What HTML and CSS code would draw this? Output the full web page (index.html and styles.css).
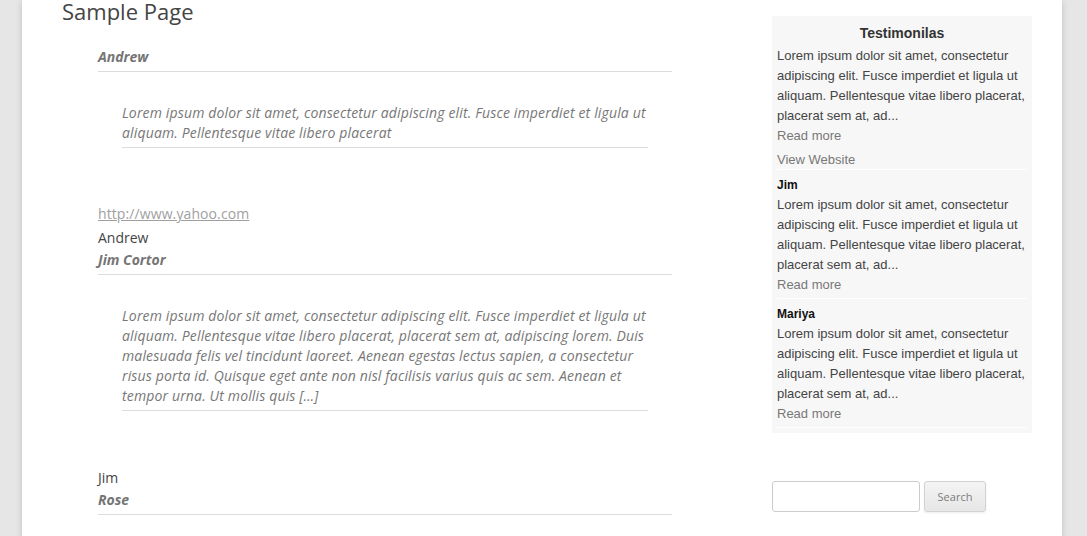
FILE: index.html
```html
<!DOCTYPE html>
<html>
<head>
<meta charset="utf-8">
<link rel="stylesheet" href="styles.css">
</head>
<body>
<div class="page">
  <main class="main">
    <h1 class="title">Sample Page</h1>
    <div class="entries">
      <div class="t-name">Andrew</div>
      <blockquote class="t-quote">Lorem ipsum dolor sit amet, consectetur adipiscing elit. Fusce imperdiet et ligula ut aliquam. Pellentesque vitae libero placerat</blockquote>

      <div class="t-meta">
        <a class="t-url" href="#">http://www.yahoo.com</a>
        <div class="t-company">Andrew</div>
      </div>
      <div class="t-name">Jim Cortor</div>
      <blockquote class="t-quote">Lorem ipsum dolor sit amet, consectetur adipiscing elit. Fusce imperdiet et ligula ut aliquam. Pellentesque vitae libero placerat, placerat sem at, adipiscing lorem. Duis malesuada felis vel tincidunt laoreet. Aenean egestas lectus sapien, a consectetur risus porta id. Quisque eget ante non nisl facilisis varius quis ac sem. Aenean et tempor urna. Ut mollis quis […]</blockquote>

      <div class="t-meta last">
        <div class="t-company">Jim</div>
      </div>
      <div class="t-name">Rose</div>
    </div>
  </main>
  <aside class="sidebar">
    <div class="widget">
      <h3 class="widget-title">Testimonilas</h3>
      <div class="w-item first">
        <p class="w-text">Lorem ipsum dolor sit amet, consectetur adipiscing elit. Fusce imperdiet et ligula ut aliquam. Pellentesque vitae libero placerat, placerat sem at, ad...</p>
        <a class="w-link" href="#">Read more</a>
        <a class="w-link site" href="#">View Website</a>
      </div>
      <div class="w-item">
        <div class="w-name">Jim</div>
        <p class="w-text">Lorem ipsum dolor sit amet, consectetur adipiscing elit. Fusce imperdiet et ligula ut aliquam. Pellentesque vitae libero placerat, placerat sem at, ad...</p>
        <a class="w-link" href="#">Read more</a>
      </div>
      <div class="w-item">
        <div class="w-name">Mariya</div>
        <p class="w-text">Lorem ipsum dolor sit amet, consectetur adipiscing elit. Fusce imperdiet et ligula ut aliquam. Pellentesque vitae libero placerat, placerat sem at, ad...</p>
        <a class="w-link" href="#">Read more</a>
      </div>
    </div>
    <form class="search">
      <input class="search-input" type="text">
      <button class="search-btn" type="button">Search</button>
    </form>
  </aside>
</div>
</body>
</html>
```

FILE: styles.css
```css
html, body {
  margin: 0;
  padding: 0;
  height: 100%;
  overflow: hidden;
}
body {
  background: #e6e6e6;
  font-family: "Open Sans", "Liberation Sans", sans-serif;
  color: #444;
}
.page {
  margin: 0 25px 0 22px;
  width: 1040px;
  min-height: 100%;
  background: #fff;
  box-shadow: 0 2px 6px rgba(100, 100, 100, 0.3);
  display: flex;
  padding: 0 30px 0 40px;
  box-sizing: border-box;
}
.main {
  flex: 1;
}
.title {
  font-size: 22px;
  font-weight: 400;
  line-height: 26px;
  color: #444;
  margin: -2px 0 0 0;
}
.entries {
  width: 574px;
  margin: 22px 0 0 36px;
  font-size: 14px;
}
.t-name {
  font-weight: 700;
  font-style: italic;
  color: #757575;
  line-height: 22px;
  padding-bottom: 3px;
  border-bottom: 1px solid #dcdcdc;
}
.t-quote {
  margin: 31px 24px 0 24px;
  font-style: italic;
  color: #777;
  line-height: 20px;
  letter-spacing: 0.15px;
  padding-bottom: 4px;
  border-bottom: 1px solid #dcdcdc;
}
.t-meta {
  margin-top: 54px;
}
.t-meta.last {
  margin-top: 55px;
}
.t-url {
  display: block;
  color: #9f9f9f;
  line-height: 24px;
  letter-spacing: 0.1px;
}
.t-company {
  color: #444;
  line-height: 23px;
}
.sidebar {
  width: 260px;
  margin-left: auto;
  padding-top: 16px;
}
.widget {
  background: #f7f7f7;
  padding: 6px 5px 5px 5px;
  font-family: "Liberation Sans", Arial, sans-serif;
  font-size: 13px;
  color: #444;
}
.widget-title {
  margin: 0;
  text-align: center;
  font-size: 14px;
  font-weight: 700;
  color: #333;
  line-height: 22px;
  padding-bottom: 2px;
}
.w-item {
  padding: 5px 0 3px;
  border-bottom: 1px solid #fff;
}
.w-item.first {
  padding-top: 0;
  padding-bottom: 0;
}
.w-name {
  font-size: 12px;
  font-weight: 700;
  color: #111;
  line-height: 20px;
}
.w-text {
  margin: 0;
  line-height: 20px;
}
.w-link {
  display: block;
  color: #777;
  text-decoration: none;
  line-height: 20px;
}
.w-link.site {
  margin-top: 5px;
  line-height: 18px;
}
.search {
  margin-top: 48px;
  display: flex;
  gap: 4px;
}
.search-input {
  width: 148px;
  height: 31px;
  box-sizing: border-box;
  border: 1px solid #ccc;
  border-radius: 3px;
  padding: 0;
  margin: 0;
  background: #fff;
}
.search-btn {
  width: 62px;
  height: 31px;
  box-sizing: border-box;
  border: 1px solid #d2d2d2;
  border-radius: 3px;
  background: linear-gradient(#f4f4f4, #e6e6e6);
  box-shadow: 0 1px 2px rgba(64, 64, 64, 0.1);
  font-family: "Open Sans", sans-serif;
  font-size: 11px;
  color: #7c7c7c;
  padding: 0;
  margin: 0;
}
```
